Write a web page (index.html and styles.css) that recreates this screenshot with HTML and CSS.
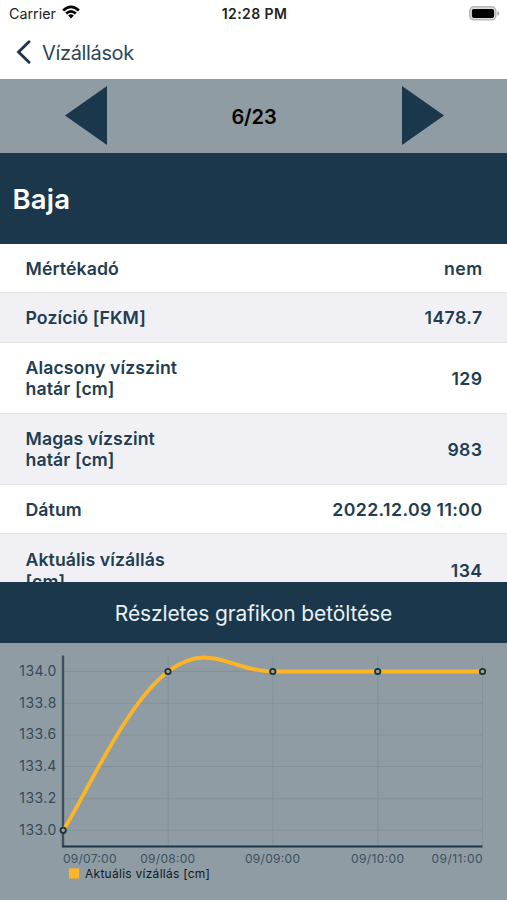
FILE: index.html
```html
<!DOCTYPE html>
<html lang="hu">
<head>
<meta charset="utf-8">
<title>Vízállások</title>
<link rel="stylesheet" href="styles.css">
</head>
<body>
<div class="screen">
  <div class="status">
    <div class="carrier"><span>Carrier</span>
      <svg class="wifi" width="18" height="14" viewBox="0 0 18 14"><path d="M0.2 4.4Q9-3.4 17.8 4.4L15.9 6.4Q9 .3 2.1 6.4Z"/><path d="M3.2 7.5Q9 2.5 14.8 7.5L12.9 9.4Q9 6.1 5.1 9.4Z"/><path d="M6.2 10.5Q9 8.2 11.8 10.5L9 13.4Z"/></svg>
    </div>
    <span class="time">12:28 PM</span>
    <div class="battery"><svg width="31" height="15" viewBox="0 0 31 15"><rect x=".8" y=".8" width="26" height="13" rx="3.8" fill="#ddd" stroke="#b9b9b9" stroke-width="1.5"/><rect x="2.9" y="2.9" width="22.2" height="9" rx="1.8"/><path d="M28.3 5q2 .7 2 2.4t-2 2.4z" fill="#aaa"/></svg></div>
  </div>
  <nav class="nav">
    <svg width="16" height="24" viewBox="0 0 16 24"><path d="M13 1.8L2.6 12 13 22.2" fill="none" stroke="#1a374b" stroke-width="2.9" stroke-linecap="round" stroke-linejoin="miter"/></svg>
    <span class="nav-label">Vízállások</span>
  </nav>
  <div class="pager">
    <svg width="42" height="59" viewBox="0 0 42 59"><path d="M42 0V59L0 29.5Z"/></svg>
    <span class="page">6/23</span>
    <svg width="42" height="59" viewBox="0 0 42 59"><path d="M0 0V59L42 29.5Z"/></svg>
  </div>
  <h1 class="station"><span>Baja</span></h1>
  <div class="list">
    <div class="row"><span>Mértékadó</span><span class="value">nem</span></div>
    <div class="row"><span>Pozíció [FKM]</span><span class="value">1478.7</span></div>
    <div class="row"><span>Alacsony vízszint<br>határ [cm]</span><span class="value">129</span></div>
    <div class="row"><span>Magas vízszint<br>határ [cm]</span><span class="value">983</span></div>
    <div class="row"><span>Dátum</span><span class="value">2022.12.09 11:00</span></div>
    <div class="row"><span>Aktuális vízállás<br>[cm]</span><span class="value">134</span></div>
  </div>
  <div class="load"><span>Részletes grafikon betöltése</span></div>
  <svg class="chart" width="507" height="257" viewBox="0 643 507 257">
    <g class="grid">
      <path d="M63 671.5H483M63 703.3H483M63 735H483M63 766.5H483M63 798.8H483M63 830.3H483M168.2 655V846M273 655V846M377.8 655V846M482.5 655V846"/>
    </g>
    <path class="axis-y" d="M63 655.5V846.5"/>
    <path class="axis-x" d="M62 846.5H482.5"/>
    <path class="line" d="M63.2 830.3C84 798.5 126 703 168 671.5C210 640 231 671.5 273 671.5H482.5"/>
    <g class="dots"><circle cx="63.2" cy="830.3" r="2.7"/><circle cx="168" cy="671.5" r="2.7"/><circle cx="272.8" cy="671.5" r="2.7"/><circle cx="377.7" cy="671.5" r="2.7"/><circle cx="482.5" cy="671.5" r="2.7"/></g>
    <g class="ylab">
      <text x="19.3" y="675.8" textLength="37">134.0</text>
      <text x="19.3" y="707.6" textLength="37">133.8</text>
      <text x="19.3" y="739.3" textLength="37">133.6</text>
      <text x="19.3" y="771.1" textLength="37">133.4</text>
      <text x="19.3" y="802.9" textLength="37">133.2</text>
      <text x="19.3" y="834.6" textLength="37">133.0</text>
    </g>
    <g class="xlab">
      <text x="63" y="863.3" textLength="53.5">09/07:00</text>
      <text x="140.2" y="863.3" textLength="55">09/08:00</text>
      <text x="245" y="863.3" textLength="55">09/09:00</text>
      <text x="351" y="863.3" textLength="53">09/10:00</text>
      <text x="431.5" y="863.3" textLength="51">09/11:00</text>
    </g>
    <rect class="key" x="69" y="868.3" width="10.2" height="10.2"/>
    <text class="legend" x="85" y="877.6" textLength="125">Aktuális vízállás [cm]</text>
  </svg>
</div>
</body>
</html>
```
FILE: styles.css
```css
* { box-sizing: border-box; }
body { margin: 0; background: #fff; }
.screen {
  width: 507px; height: 900px; overflow: hidden;
  display: flex; flex-direction: column;
  font-family: Inter, "Liberation Sans", sans-serif; color: #1a374b;
}
.status {
  height: 27px; flex: none; padding: 0 7px 0 9px;
  display: grid; grid-template-columns: 1fr auto 1fr; align-items: center; color: #222;
}
.carrier { display: flex; align-items: center; gap: 6px; font-size: 14.3px; }
.wifi { margin-top: -3px; }
.time { font-size: 14px; font-weight: 600; letter-spacing: 0.4px; }
.battery { display: flex; justify-content: flex-end; }
.nav { height: 52px; flex: none; display: flex; align-items: center; gap: 10px; padding-left: 16px; }
.nav svg { margin-top: -2px; }
.nav-label { font-size: 20px; letter-spacing: -0.35px; color: #2c475b; }
.pager {
  height: 73.5px; flex: none; padding: 0 63px 1px 65px; background: #8f9ca4;
  display: flex; align-items: center; justify-content: space-between;
}
.pager svg { fill: #1a374b; }
.page { font-size: 20px; font-weight: 600; color: #000; padding: 3px 1px 0 0; letter-spacing: -0.1px; }
.station {
  height: 91.5px; flex: none; margin: 0; padding: 1px 13px 0 12.5px; background: #1a374b; color: #fff;
  display: flex; align-items: center; font-size: 27.5px; font-weight: 600; letter-spacing: 0.2px;
}
.list { height: 338px; flex: none; overflow: hidden; }
.row {
  display: flex; justify-content: space-between; align-items: center;
  padding: 14.2px 24.5px 12.4px 25.5px; border-bottom: 1px solid #e3e3e6;
  font-size: 17.7px; line-height: 21.7px; font-weight: 600; letter-spacing: 0.08px; color: #213d50;
}
.row:last-child { padding-top: 15.2px; }
.value { letter-spacing: 0.4px; }
.row:nth-child(even) { background: #f1f0f5; }
.load {
  height: 61px; flex: none; padding-top: 1px; background: #1a374b; color: #e9f0f6;
  display: flex; align-items: center; justify-content: center; font-size: 21px; letter-spacing: -0.12px;
}
.chart { display: block; flex: none; background: #8f9ca4; }
.grid path { stroke: #83919a; stroke-width: 1; fill: none; }
.axis-y { stroke: #3a5163; stroke-width: 2.4; }
.axis-x { stroke: #1a374b; stroke-width: 2.2; }
.line { fill: none; stroke: #fcb526; stroke-width: 3.8; }
.dots circle { fill: #9da4a0; stroke: #1a323f; stroke-width: 1.8; }
.ylab { font-size: 14px; fill: #334b5c; }
.xlab { font-size: 12px; fill: #3a5161; }
.key { fill: #fcb526; }
.legend { font-size: 12px; fill: #101a20; }
```
